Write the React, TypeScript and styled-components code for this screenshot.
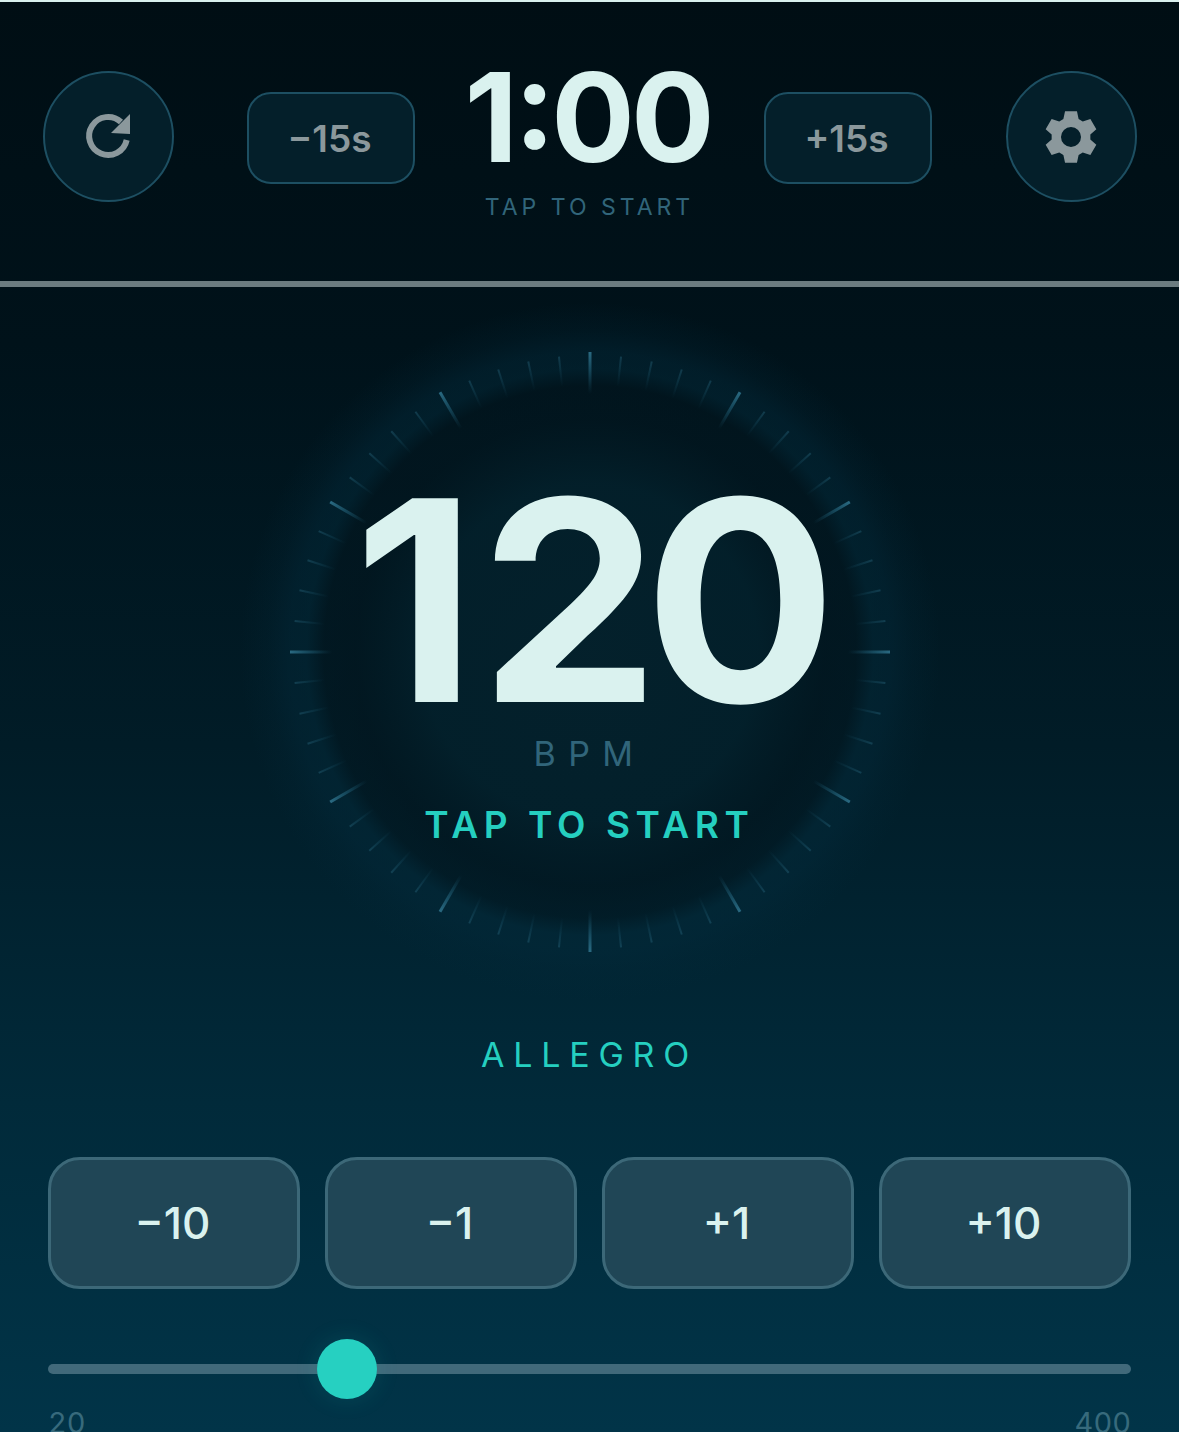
import React from 'react';
import styled, { createGlobalStyle } from 'styled-components';

const GlobalStyle = createGlobalStyle`
  html, body {
    margin: 0;
    padding: 0;
    background: #000e14;
  }
  * {
    box-sizing: border-box;
  }
`;

const TICK_COUNT = 60;
const CENTER = 350;
const TICK_OUTER = 300;

const BPM_MIN = 20;
const BPM_MAX = 400;
const BPM = 120;
const TRACK_WIDTH = 1083;
const THUMB_SIZE = 60;

const ticks = Array.from({ length: TICK_COUNT }, (_, index) => {
  const major = index % 5 === 0;
  return { index, major, angle: index * 6 };
});

// six flat teeth, first one pointing straight up
const gearOutline = () => {
  const point = (radius: number, degrees: number) => {
    const rad = ((degrees - 90) * Math.PI) / 180;
    return `${(30 + radius * Math.cos(rad)).toFixed(2)} ${(31 + radius * Math.sin(rad)).toFixed(2)}`;
  };
  const parts: string[] = [];
  for (let i = 0; i < 6; i++) {
    const a = i * 60;
    parts.push(point(19.5, a - 23), point(26.5, a - 13), point(26.5, a + 13), point(19.5, a + 23));
  }
  return `M${parts.join('L')}Z`;
};

const RefreshIcon = () => (
  <svg width="60" height="60" viewBox="0 0 60 60" fill="none">
    <path d="M48.7 34A19 19 0 1 1 43 16" stroke="#8b989c" strokeWidth="6" />
    <path d="M52 8V28L33 27Z" fill="#8b989c" />
  </svg>
);

const GearIcon = () => (
  <svg width="60" height="60" viewBox="0 0 60 60">
    <path
      fill="#8b989c"
      fillRule="evenodd"
      d={`${gearOutline()}M30 21a10 10 0 1 0 0 20a10 10 0 1 0 0-20Z`}
    />
  </svg>
);

const DialFace = () => (
  <DialSvg width={CENTER * 2} height={CENTER * 2} viewBox="0 0 700 700">
    <defs>
      <radialGradient id="ring" cx="50%" cy="50%" r="50%">
        <stop offset="0%" stopColor="#04212c" stopOpacity="0.95" />
        <stop offset="48%" stopColor="#03202b" stopOpacity="0.9" />
        <stop offset="67%" stopColor="#02161f" stopOpacity="0.7" />
        <stop offset="76%" stopColor="#02161f" stopOpacity="0.5" />
        <stop offset="81%" stopColor="#032a3a" stopOpacity="0.5" />
        <stop offset="86%" stopColor="#032a3b" stopOpacity="0.45" />
        <stop offset="92%" stopColor="#032a3b" stopOpacity="0.2" />
        <stop offset="100%" stopColor="#032a3b" stopOpacity="0" />
      </radialGradient>
      <linearGradient id="tick" x1="0" y1="0" x2="0" y2="1">
        <stop offset="0%" stopColor="#2a6a82" />
        <stop offset="100%" stopColor="#1c5b73" stopOpacity="0" />
      </linearGradient>
    </defs>
    <circle cx={CENTER} cy={CENTER} r={CENTER} fill="url(#ring)" />
    {ticks.map((tick) => (
      <rect
        key={tick.index}
        x={tick.major ? CENTER - 1.5 : CENTER - 1}
        y={CENTER - (tick.major ? TICK_OUTER : TICK_OUTER - 3)}
        width={tick.major ? 3 : 2}
        height={tick.major ? 42 : 30}
        fill="url(#tick)"
        opacity={tick.major ? 1 : 0.4}
        transform={`rotate(${tick.angle} ${CENTER} ${CENTER})`}
      />
    ))}
  </DialSvg>
);

export default function App() {
  const thumbLeft =
    THUMB_SIZE / 2 + ((BPM - BPM_MIN) / (BPM_MAX - BPM_MIN)) * (TRACK_WIDTH - THUMB_SIZE);

  return (
    <Screen>
      <GlobalStyle />
      <TopEdge />
      <TimerBar>
        <CircleButton aria-label="Reset">
          <RefreshIcon />
        </CircleButton>
        <TimerControls>
          <SkipButton>−15s</SkipButton>
          <TimerReadout>
            <TimerValue>1:00</TimerValue>
            <TimerHint>TAP TO START</TimerHint>
          </TimerReadout>
          <SkipButton>+15s</SkipButton>
        </TimerControls>
        <CircleButton aria-label="Settings">
          <GearIcon />
        </CircleButton>
      </TimerBar>
      <Divider />
      <DialArea>
        <DialFace />
        <BpmValue>
          <BpmDigit $tracking={3}>1</BpmDigit>
          <BpmDigit $tracking={-15}>2</BpmDigit>
          <BpmDigit $tracking={-10}>0</BpmDigit>
        </BpmValue>
        <BpmUnit>BPM</BpmUnit>
        <StartLabel>TAP TO START</StartLabel>
      </DialArea>
      <TempoName>ALLEGRO</TempoName>
      <StepRow>
        <StepButton>−10</StepButton>
        <StepButton>−1</StepButton>
        <StepButton>+1</StepButton>
        <StepButton>+10</StepButton>
      </StepRow>
      <SliderTrack>
        <SliderThumb style={{ left: thumbLeft }} />
      </SliderTrack>
      <SliderLabels>
        <span>{BPM_MIN}</span>
        <span>{BPM_MAX}</span>
      </SliderLabels>
    </Screen>
  );
}

const Screen = styled.div`
  width: 1179px;
  height: 1432px;
  overflow: hidden;
  font-family: 'Inter', 'Liberation Sans', sans-serif;
  background: linear-gradient(180deg, #000e14 0%, #00121a 24%, #011c27 52%, #012a3a 77%, #013448 100%);
`;

const TopEdge = styled.div`
  height: 2px;
  background: #d9f1ee;
`;

const TimerBar = styled.header`
  height: 279px;
  display: flex;
  align-items: flex-start;
  padding: 68.5px 42.5px 0;
`;

const TimerControls = styled.div`
  flex: 1;
  display: flex;
  align-items: flex-start;
  padding: 0 73.5px;
`;

const CircleButton = styled.button`
  width: 131px;
  height: 131px;
  flex: none;
  display: flex;
  align-items: center;
  justify-content: center;
  padding: 0;
  border-radius: 50%;
  border: 2.5px solid #1d4f62;
  background: #041f2a;
`;

const SkipButton = styled.button`
  width: 168px;
  height: 92px;
  flex: none;
  margin-top: 21.5px;
  padding: 0 3px 0 0;
  border-radius: 24px;
  border: 2.5px solid #1d4f62;
  background: #041f2a;
  color: #8b989c;
  font: 600 37px 'Inter', sans-serif;
`;

const TimerReadout = styled.div`
  flex: 1;
  display: flex;
  flex-direction: column;
  align-items: center;
`;

const TimerValue = styled.div`
  margin-top: -1.5px;
  padding-right: 4px;
  font-size: 124px;
  font-weight: 700;
  font-feature-settings: 'case';
  line-height: 96px;
  letter-spacing: -4px;
  color: #daf2ef;
`;

const TimerHint = styled.div`
  margin-top: 28px;
  font-size: 23px;
  line-height: 28px;
  letter-spacing: 4px;
  color: #31657a;
`;

const Divider = styled.div`
  height: 6px;
  background: #6c7c80;
`;

const DialArea = styled.section`
  position: relative;
  height: 686px;
  display: flex;
  flex-direction: column;
  align-items: center;
  padding-top: 194px;
`;

const DialSvg = styled.svg`
  position: absolute;
  left: 240px;
  top: 15px;
`;

const BpmValue = styled.div`
  position: relative;
  font-size: 280px;
  font-weight: 700;
  line-height: 240px;
  color: #daf2ef;
  transform: scaleX(1.02);
`;

const BpmDigit = styled.span<{ $tracking: number }>`
  letter-spacing: ${(props) => props.$tracking}px;
`;

const BpmUnit = styled.div`
  position: relative;
  margin-top: 13px;
  font-size: 34px;
  line-height: 40px;
  letter-spacing: 12.5px;
  color: #31657a;
`;

const StartLabel = styled.div`
  position: relative;
  margin-top: 28px;
  font-size: 37px;
  font-weight: 600;
  line-height: 46px;
  letter-spacing: 5.6px;
  color: #25cfc0;
`;

const TempoName = styled.div`
  margin-top: 62px;
  text-align: center;
  font-size: 34px;
  line-height: 40px;
  letter-spacing: 8.8px;
  color: #25cfc0;
`;

const StepRow = styled.div`
  margin-top: 81.5px;
  padding: 0 48px;
  display: grid;
  grid-template-columns: repeat(4, 1fr);
  gap: 25px;
`;

const StepButton = styled.button`
  height: 132px;
  padding: 0 3px 0 0;
  border-radius: 32px;
  border: 3px solid #3c6878;
  background: #204656;
  color: #daf2ef;
  font: 500 44px 'Inter', sans-serif;
`;

const SliderTrack = styled.div`
  position: relative;
  margin: 75.5px 48px 0;
  height: 10px;
  border-radius: 5px;
  background: #41697a;
`;

const SliderThumb = styled.div`
  position: absolute;
  top: 50%;
  width: 60px;
  height: 60px;
  transform: translate(-50%, -50%);
  border-radius: 50%;
  background: #26d0c1;
  box-shadow: 0 0 24px rgba(38, 208, 193, 0.14);
`;

const SliderLabels = styled.div`
  margin: 32px 48px 0;
  display: flex;
  justify-content: space-between;
  font-size: 29px;
  font-feature-settings: 'tnum';
  line-height: 34px;
  color: #376a7c;
`;
